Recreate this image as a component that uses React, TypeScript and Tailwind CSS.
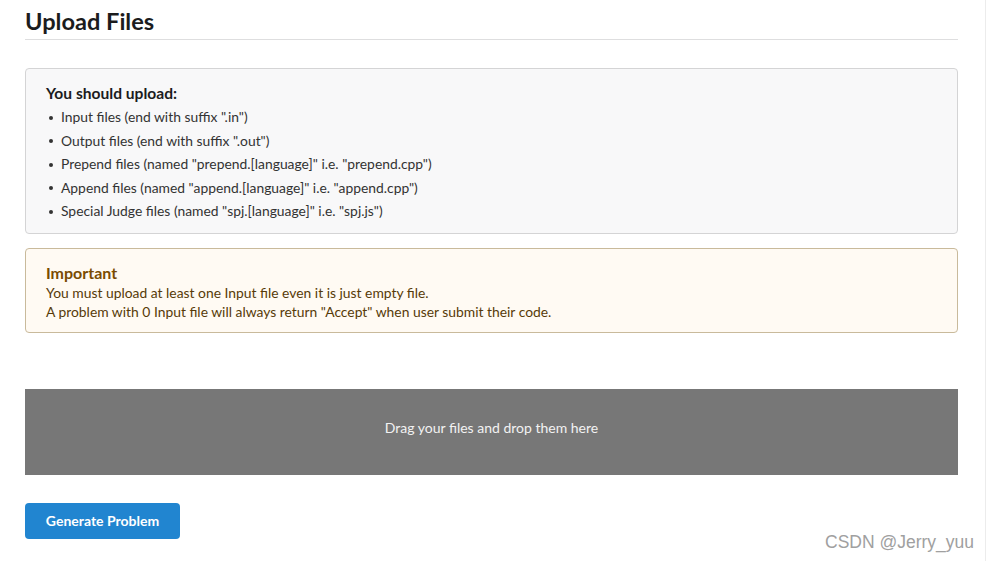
import React from "react";

const items = [
  'Input files (end with suffix ".in")',
  'Output files (end with suffix ".out")',
  'Prepend files (named "prepend.[language]" i.e. "prepend.cpp")',
  'Append files (named "append.[language]" i.e. "append.cpp")',
  'Special Judge files (named "spj.[language]" i.e. "spj.js")',
];

function App() {
  return (
    <div className="relative w-[989px] h-[561px] bg-white overflow-hidden font-['Lato','Noto_Sans',sans-serif] text-[13.86px] text-[#212121]">
      <div className="ml-[25px] w-[933px] pt-[6px]">
        {/* header */}
        <h2 className="text-[23.6px] leading-[30px] font-bold text-[#1b1c1d] pb-[3px] border-b border-[#dededf]">
          Upload Files
        </h2>

        {/* info message */}
        <div className="mt-[28px] bg-[#f8f8f9] border border-[#d4d4d5] rounded-[4px] px-[20px] pt-[12px] pb-[9px]">
          <div className="text-[15.6px] font-bold leading-[24px] text-[#1b1c1d]">You should upload:</div>
          <ul className="mt-[1px]">
            {items.map((t) => (
              <li key={t} className="flex items-center h-[23.5px] text-[#333333]">
                <span className="w-[4px] h-[4px] rounded-full bg-[#333333] ml-[3px] mr-[8px]" />
                {t}
              </li>
            ))}
          </ul>
        </div>

        {/* warning message */}
        <div className="mt-[14px] bg-[#fffaf3] border border-[#c9ba9b] rounded-[4px] px-[20px] pt-[14px] pb-[11px]">
          <div className="text-[16px] font-bold leading-[20px] text-[#794b02]">Important</div>
          <p className="leading-[19px] text-[#573a08]">You must upload at least one Input file even it is just empty file.</p>
          <p className="leading-[19px] text-[#573a08]">
            A problem with 0 Input file will always return "Accept" when user submit their code.
          </p>
        </div>

        {/* drop zone */}
        <div className="mt-[56px] h-[86px] bg-[#777777] flex items-center justify-center pb-[8px] text-[14px] text-[#f2f2f2]">
          Drag your files and drop them here
        </div>

        {/* button */}
        <button className="mt-[28px] w-[155px] h-[36px] rounded-[4px] bg-[#2185d0] text-white font-bold text-[14px]">
          Generate Problem
        </button>
      </div>

      <div className="absolute right-0 top-0 h-[561px] w-[4px] border-l border-[#ececec]" />
      <div className="absolute left-[825px] top-[529px] text-[17.5px] text-[#a0a0a0] font-['Liberation_Sans',Arial,sans-serif]">
        CSDN @Jerry_yuu
      </div>
    </div>
  );
}

export default App;
